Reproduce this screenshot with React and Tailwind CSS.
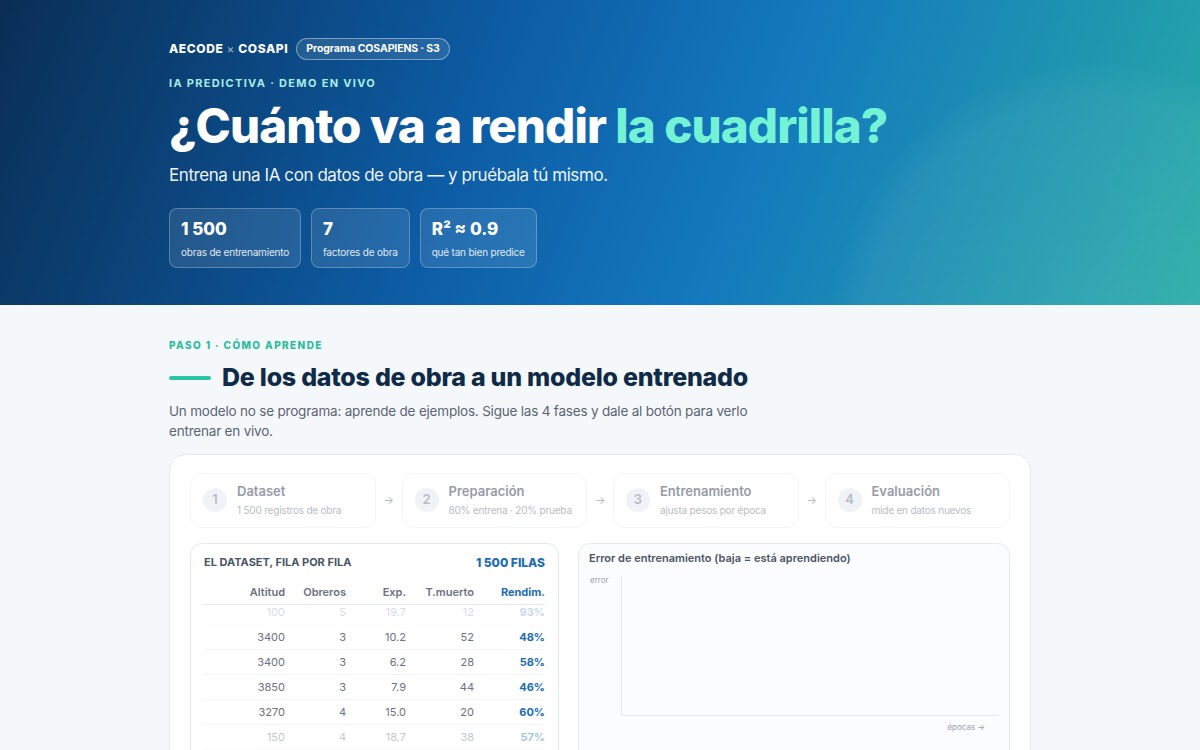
import React from 'react';

const stats = [
  { value: '1 500', label: 'obras de entrenamiento' },
  { value: '7', label: 'factores de obra' },
  { value: 'R² ≈ 0.9', label: 'qué tan bien predice' },
];

const steps = [
  { n: 1, title: 'Dataset', sub: '1 500 registros de obra' },
  { n: 2, title: 'Preparación', sub: '80% entrena · 20% prueba' },
  { n: 3, title: 'Entrenamiento', sub: 'ajusta pesos por época' },
  { n: 4, title: 'Evaluación', sub: 'mide en datos nuevos' },
];

const rows = [
  { alt: 100, obr: 5, exp: '19.7', tm: 12, r: '93%', fade: 'opacity-25' },
  { alt: 3400, obr: 3, exp: '10.2', tm: 52, r: '48%', fade: '' },
  { alt: 3400, obr: 3, exp: '6.2', tm: 28, r: '58%', fade: '' },
  { alt: 3850, obr: 3, exp: '7.9', tm: 44, r: '46%', fade: '' },
  { alt: 3270, obr: 4, exp: '15.0', tm: 20, r: '60%', fade: '' },
  { alt: 150, obr: 4, exp: '18.7', tm: 38, r: '57%', fade: 'opacity-40' },
];

const cols = 'grid grid-cols-[81px_61px_60px_68px_1fr] text-right';

const font = { fontFamily: 'Inter, "Noto Sans", sans-serif' };

export default function App() {
  return (
    <div className="min-h-screen bg-[#f5f8fb]" style={font}>
      {/* Hero */}
      <header className="relative h-[305px] overflow-hidden bg-[linear-gradient(112deg,#0a2e55_0%,#0d5da6_40%,#1479bd_62%,#27aba6_100%)]">
        <div className="absolute left-[830px] top-[65px] h-[540px] w-[540px] rounded-full bg-[radial-gradient(circle,rgba(255,255,255,0.08)_0%,rgba(255,255,255,0.05)_62%,rgba(255,255,255,0)_72%)]" />
        <div className="relative mx-auto w-[862px] pt-[38px]">
          <div className="flex items-center gap-[8px]">
            <span className="text-[12px] font-extrabold tracking-[0.05em] text-white">
              AECODE <span className="font-normal text-white/60">×</span> COSAPI
            </span>
            <span className="rounded-full border border-white/40 bg-white/10 px-[9px] py-[2px] text-[10.5px] font-bold tracking-[-0.01em] text-white">
              Programa COSAPIENS · S3
            </span>
          </div>
          <div className="mt-[15px] text-[11px] font-bold tracking-[0.12em] text-[#a8ece6]">
            IA PREDICTIVA · DEMO EN VIVO
          </div>
          <h1 className="mt-[7px] text-[47.5px] font-extrabold leading-[56px] tracking-[-0.02em] text-white">
            ¿Cuánto va a rendir <span className="text-[#74f2d6]">la cuadrilla?</span>
          </h1>
          <p className="mt-[9px] text-[17px] tracking-[-0.025em] text-white/95">
            Entrena una IA con datos de obra — y pruébala tú mismo.
          </p>
          <div className="mt-[19px] flex gap-[10px]">
            {stats.map((s) => (
              <div
                key={s.label}
                className="h-[60px] rounded-lg border border-white/25 bg-white/10 px-[11px] pt-[9px]"
              >
                <div className="text-[17px] font-extrabold leading-[22px] text-white">{s.value}</div>
                <div className="mt-[5px] text-[10px] tracking-[-0.02em] text-white/85">{s.label}</div>
              </div>
            ))}
          </div>
        </div>
      </header>

      {/* Paso 1 */}
      <main className="mx-auto w-[862px] pt-[33px]">
        <div className="text-[10px] font-extrabold tracking-[0.14em] text-[#2dbb9c]">
          PASO 1 · CÓMO APRENDE
        </div>
        <div className="mt-[6px] flex items-center gap-[11px]">
          <div className="h-[4px] w-[42px] rounded-full bg-[#2ec4a6]" />
          <h2 className="text-[25px] font-extrabold tracking-[-0.01em] text-[#0f2b47]">
            De los datos de obra a un modelo entrenado
          </h2>
        </div>
        <p className="mt-[4px] w-[585px] text-[13.5px] leading-[20px] tracking-[-0.015em] text-[#5b6472]">
          Un modelo no se programa: aprende de ejemplos. Sigue las 4 fases y dale al botón para verlo
          entrenar en vivo.
        </p>

        <section className="mt-[13px] rounded-2xl border border-[#e4e9f0] bg-white px-[20px] pt-[18px] pb-[20px]">
          {/* Steps */}
          <div className="flex items-center gap-[8px] opacity-70">
            {steps.map((s, i) => (
              <React.Fragment key={s.n}>
                {i > 0 && <span className="w-[10px] text-center text-[11px] text-gray-400">→</span>}
                <div className="flex h-[55px] flex-1 items-center gap-[10px] rounded-xl border border-[#eef1f5] px-[12px]">
                  <div className="flex h-[24px] w-[24px] shrink-0 items-center justify-center rounded-full bg-[#e9eef5] text-[13px] font-semibold text-gray-400">
                    {s.n}
                  </div>
                  <div className="whitespace-nowrap">
                    <div className="text-[13px] font-semibold text-gray-500">{s.title}</div>
                    <div className="mt-[2px] text-[10px] tracking-[-0.02em] text-gray-400">{s.sub}</div>
                  </div>
                </div>
              </React.Fragment>
            ))}
          </div>

          {/* Panels */}
          <div className="mt-[15px] flex gap-[19px]">
            <div className="w-[369px] rounded-xl border border-[#e4e9f0] bg-white px-[13px] pt-[10px]">
              <div className="flex items-center justify-between">
                <span className="text-[11px] font-bold text-gray-600">EL DATASET, FILA POR FILA</span>
                <span className="text-[12px] font-extrabold text-[#1b6db4]">1 500 FILAS</span>
              </div>
              <div className={`${cols} mt-[12px] border-b border-gray-200 pb-[4px] text-[11px] font-semibold text-gray-500`}>
                <span>Altitud</span>
                <span>Obreros</span>
                <span>Exp.</span>
                <span>T.muerto</span>
                <span className="font-bold text-[#1b6db4]">Rendim.</span>
              </div>
              <div className="h-[160px] overflow-hidden">
                <div className="-mt-[5px] text-[11px] text-gray-500">
                  {rows.map((r, i) => (
                    <div key={i} className={`${cols} h-[25px] items-center border-b border-gray-100 ${r.fade}`}>
                      <span>{r.alt}</span>
                      <span>{r.obr}</span>
                      <span>{r.exp}</span>
                      <span>{r.tm}</span>
                      <span className="font-bold text-[#1b6db4]">{r.r}</span>
                    </div>
                  ))}
                </div>
              </div>
            </div>

            <div className="flex-1 rounded-xl border border-[#e4e9f0] bg-[#fbfcfe] px-[10px] pt-[6px] pb-[10px]">
              <div className="text-[11px] font-semibold text-gray-600">
                Error de entrenamiento (baja = está aprendiendo)
              </div>
              <div className="mt-[8px] flex">
                <div className="w-[32px] pl-[1px] text-[8px] text-gray-400">error</div>
                <div className="flex-1">
                  <div className="mt-[2px] h-[140px] border-b border-l border-gray-200" />
                  <div className="mt-[5px] pr-[14px] text-right text-[8px] text-gray-400">épocas →</div>
                </div>
              </div>
            </div>
          </div>
        </section>
      </main>
    </div>
  );
}
